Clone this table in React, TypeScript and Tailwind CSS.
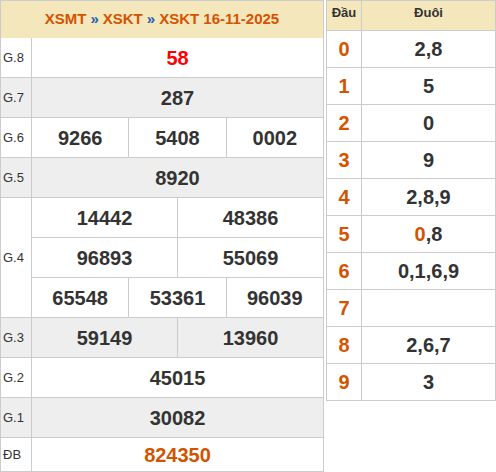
import React from "react";

const F = { fontFamily: '"Liberation Sans", Arial, sans-serif' };

function Row({ label, grey, children }: { label: string; grey?: boolean; children: React.ReactNode }) {
  return (
    <div className={`flex ${grey ? "bg-[#eeeeee]" : "bg-white"}`}>
      <div className="w-[31px] shrink-0 border-r border-b border-[#cccccc] flex items-center pl-[2px] text-[13px] text-[#333333]">
        {label}
      </div>
      <div className="flex-1 flex flex-col">{children}</div>
    </div>
  );
}

function Cells({ vals, h = "h-[40px]", cls = "text-[#333333]" }: { vals: string[]; h?: string; cls?: string }) {
  return (
    <div className={`flex ${h}`}>
      {vals.map((v, i) => (
        <div
          key={i}
          className={`flex-1 basis-0 border-r border-b border-[#cccccc] flex items-center justify-center text-[20px] font-bold ${cls}`}
        >
          {v}
        </div>
      ))}
    </div>
  );
}

const loto: [string, string, boolean?][] = [
  ["0", "2,8"],
  ["1", "5"],
  ["2", "0"],
  ["3", "9"],
  ["4", "2,8,9"],
  ["5", "", true],
  ["6", "0,1,6,9"],
  ["7", ""],
  ["8", "2,6,7"],
  ["9", "3"],
];

export default function App() {
  return (
    <div style={F} className="w-[496px] h-[472px] bg-white flex items-start gap-[2px]">
      <div className="w-[324px] border-t border-l border-[#cccccc]">
        <div className="h-[37px] bg-[#f5e7bc] border-r border-[#cccccc] flex items-center justify-center text-[15px] font-bold text-[#d35400]">
          <span>XSMT</span>
          <span className="text-[#1f5fa8] mx-[4px]">»</span>
          <span>XSKT</span>
          <span className="text-[#1f5fa8] mx-[4px]">»</span>
          <span>XSKT 16-11-2025</span>
        </div>
        <Row label="G.8">
          <Cells vals={["58"]} cls="text-[#ff0000]" />
        </Row>
        <Row label="G.7" grey>
          <Cells vals={["287"]} />
        </Row>
        <Row label="G.6">
          <Cells vals={["9266", "5408", "0002"]} />
        </Row>
        <Row label="G.5" grey>
          <Cells vals={["8920"]} />
        </Row>
        <Row label="G.4">
          <Cells vals={["14442", "48386"]} />
          <Cells vals={["96893", "55069"]} />
          <Cells vals={["65548", "53361", "96039"]} />
        </Row>
        <Row label="G.3" grey>
          <Cells vals={["59149", "13960"]} />
        </Row>
        <Row label="G.2">
          <Cells vals={["45015"]} />
        </Row>
        <Row label="G.1" grey>
          <Cells vals={["30082"]} />
        </Row>
        <Row label="ĐB">
          <Cells vals={["824350"]} h="h-[34px]" cls="text-[#d35400] text-[18px]" />
        </Row>
      </div>
      <div className="w-[170px] border-t border-l border-[#cccccc]">
        <div className="flex h-[30px] bg-[#f5e7bc] text-[13px] font-bold text-[#333333]">
          <div className="w-[35px] border-r border-b border-[#cccccc] flex items-center justify-center pb-[6px]">Đầu</div>
          <div className="flex-1 border-r border-b border-[#cccccc] flex items-center justify-center pb-[6px]">Đuôi</div>
        </div>
        {loto.map(([d, t, special]) => (
          <div key={d} className="flex h-[37px]">
            <div className="w-[35px] border-r border-b border-[#cccccc] flex items-center justify-center text-[20px] font-bold text-[#d35400]">
              {d}
            </div>
            <div className="flex-1 border-r border-b border-[#cccccc] flex items-center justify-center text-[20px] font-bold text-[#333333]">
              {special ? (
                <>
                  <span className="text-[#d35400]">0</span>,8
                </>
              ) : (
                t
              )}
            </div>
          </div>
        ))}
      </div>
    </div>
  );
}
